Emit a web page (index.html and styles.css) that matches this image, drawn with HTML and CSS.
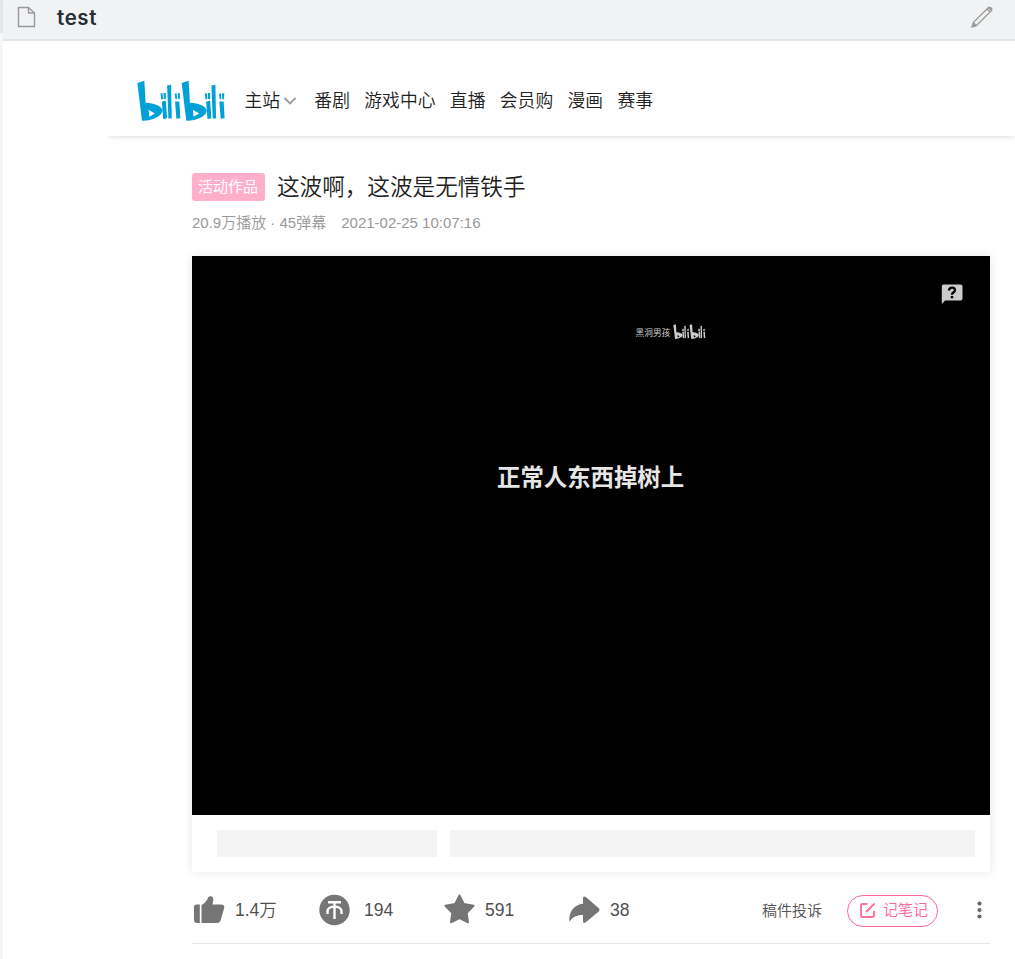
FILE: index.html
```html
<!DOCTYPE html>
<html lang="zh-CN">
<head>
<meta charset="utf-8">
<title>test</title>
<link rel="stylesheet" href="styles.css">
</head>
<body>
<svg class="defs" width="0" height="0" aria-hidden="true">
  <symbol id="bili" viewBox="0 0 267 124">
    <g id="half">
      <path fill-rule="evenodd" d="M0 9L21 2L25 69C50 70 76 80 76 93C73 111 43 124 14 123ZM34 90L53 101L36 111Z"/>
      <path d="M70 40h6l2 18h-6zM79 39h7v19h-6zM74 65l12-2 4 53-12 2zM90 17l12-3 2 102-10 1zM113 41h6l1 17h-5zM122 40h7l-1 18h-5zM114 65h13l3 51-12 1z"/>
    </g>
    <use href="#half" x="134"/>
  </symbol>
</svg>
<div class="page">
  <header class="titlebar">
    <svg class="file" width="19" height="22" viewBox="0 0 19 22"><path d="M1.500 1.500h10l6 5.500v13.500h-16zM11.500 1.500V7h6"/></svg>
    <h1>test</h1>
    <svg class="pencil" width="24" height="24" viewBox="0 0 24 24"><path d="M2 22l1.300-4.500L18.500 2.500q1-.8 2 0l1 1q.8 1 0 2L6.300 20.700zM3.300 17.500l3 3.200M17 4l3 3"/><path class="tip" d="M2 22l1-4 3 3zM18 3l1.500-1 2.500 2.500-1 1.500z"/></svg>
  </header>
  <div class="site">
    <nav class="nav">
      <svg class="logo" width="89" height="41"><use href="#bili"/></svg>
      <span class="main">主站<svg width="14" height="10" viewBox="0 0 14 10"><path d="M1.500 2l5.500 5.500L12.500 2"/></svg></span>
      <span>番剧</span><span>游戏中心</span><span>直播</span><span>会员购</span><span>漫画</span><span>赛事</span>
    </nav>
    <main class="content">
      <div class="heading"><span class="badge">活动作品</span><h2>这波啊，这波是无情铁手</h2></div>
      <div class="meta"><span>20.9万播放 · 45弹幕</span><span>2021-02-25 10:07:16</span></div>
      <section class="player">
        <div class="video">
          <svg class="help" width="22" height="21" viewBox="0 0 22 21"><path fill="#ccc" d="M2.500.5h17q2 0 2 2v12q0 2-2 2H4L.8 20V2.500Q.8.500 2.500.5z"/><path fill="none" stroke="#000" stroke-width="2.400" d="M8 6.500C8 2.600 14 2.800 14 6.300 14 8.500 11 8.200 11 10.800"/><path d="M9.700 12h2.600v2.300H9.700z"/></svg>
          <div class="mark"><span>黑洞男孩</span><svg width="33" height="15"><use href="#bili"/></svg></div>
          <div class="subtitle">正常人东西掉树上</div>
        </div>
        <div class="controls"><i class="slot short"></i><i class="slot long"></i></div>
      </section>
      <div class="toolbar">
        <span class="op like"><svg width="32" height="32" viewBox="0 0 32 32"><path d="M4.500 10.500H7.800V29H5Q2 29 2 26V13.500q0-3 2.500-3zM9.500 11q3-1 5.800-5.500c.8-1.600 1-3.200 3-3.200 2.500 0 3.200 1.700 3 3.700l-.8 4.500H29q4 0 3.200 3.500l-3.300 11.500Q28 29 25 29H9.500z"/></svg>1.4万</span>
        <span class="op coin"><svg width="32" height="32" viewBox="0 0 32 32"><circle cx="16.500" cy="16" r="15.200"/><path class="line" d="M10 8.200h13M16.500 8.500V25M9.500 20v-2.500c0-6.500 14-6.500 14 0V20"/></svg>194</span>
        <span class="op"><svg width="32" height="32" viewBox="0 0 32 32"><path class="star" d="M16.500 1.500l4.400 8.600 9.700 1.600-6.900 7 1.300 9.600-8.500-4.200L8 28.300l1.300-9.600-6.900-7 9.700-1.600z"/></svg>591</span>
        <span class="op"><svg width="32" height="32" viewBox="0 0 32 32"><path d="M15 4.500q0-3 2.800-1.500l13 11.300q1.700 1.500 0 3.200L17.800 28.300Q15 30 15 27v-6C8 21 4.500 23 1.500 28 .3 17.500 6.500 10.500 15 9.800z"/></svg>38</span>
        <span class="report">稿件投诉</span>
        <span class="note"><svg width="17" height="17" viewBox="0 0 17 17"><path d="M8.500 2H3.200Q2 2 2 3.200v10.600Q2 15 3.200 15h10.600q1.200 0 1.200-1.200V9M7 10l8.500-8.500"/></svg><span>记笔记</span></span>
        <svg class="more" width="6" height="18" viewBox="0 0 6 18"><circle cx="2.500" cy="2.500" r="2.100"/><circle cx="2.500" cy="9" r="2.100"/><circle cx="2.500" cy="15.500" r="2.100"/></svg>
      </div>
    </main>
  </div>
</div>
</body>
</html>
```
FILE: styles.css
```css
* { box-sizing: border-box; }
body {
  margin: 0;
  height: 959px;
  padding-left: 3px;
  overflow: hidden;
  background: linear-gradient(#e4e5e7 33px, #f5f6f8 33px);
  font-family: "Liberation Sans", "Noto Sans CJK SC", sans-serif;
}
svg { display: block; flex: none; }
.defs { position: absolute; }
.page { height: 959px; background: #fff; border-radius: 4px 0 0; overflow: hidden; }
.titlebar {
  display: flex;
  align-items: center;
  height: 41px;
  padding: 0 21px 6px 14px;
  background: #f1f2f4;
  border-bottom: 2px solid #e2e4e7;
}
.titlebar h1 {
  flex: 1;
  margin: 0 0 0 20px;
  padding: 2px 0 0 1px;
  font: 600 20.5px/32px Inter, sans-serif;
  letter-spacing: .6px;
  color: #292c30;
}
.file, .pencil { fill: none; stroke: #999; stroke-width: 1.4; }
.pencil { stroke-width: 1.3; }
.pencil .tip { fill: #999; stroke: none; }
.site { margin-left: 105px; }
.nav {
  display: flex;
  align-items: center;
  gap: 14.4px;
  height: 95px;
  padding: 24px 0 0 29px;
  box-shadow: 0 1px 5px rgba(0, 0, 0, .13);
  clip-path: inset(0 0 -8px 0);
  font-size: 17.8px;
  line-height: 26px;
  font-weight: 350;
  color: #212121;
  white-space: nowrap;
}
.logo { fill: #00a1d6; margin-right: 4px; }
.main { display: flex; align-items: center; gap: 3px; margin-right: 3px; }
.main svg { fill: none; stroke: #999; stroke-width: 1.8; }
.content { width: 798px; margin-left: 84px; padding-top: 37px; }
.heading { display: flex; align-items: center; height: 28px; gap: 12px; }
.badge {
  width: 73px;
  height: 28px;
  padding-right: 1px;
  border-radius: 3px;
  background: #ffafc9;
  color: #fff;
  font-size: 15px;
  line-height: 27px;
  text-align: center;
}
.heading h2 { margin: 0; padding-top: 1px; font-size: 22.6px; line-height: 28px; font-weight: 350; color: #212121; }
.meta {
  display: flex;
  gap: 15px;
  height: 24px;
  margin-top: 10px;
  font-size: 15px;
  line-height: 24px;
  font-weight: 350;
  color: #999;
}
.player { margin-top: 21px; height: 616px; box-shadow: 0 0 10px rgba(0, 0, 0, .1); }
.video { position: relative; height: 559px; background: #000; }
.help { position: absolute; left: 749px; top: 28px; }
.mark {
  position: absolute;
  left: 443.5px;
  top: 67px;
  display: flex;
  align-items: center;
  gap: 2.5px;
  height: 17px;
  color: #ccc;
  fill: #ccc;
  font-size: 8.7px;
  line-height: 17px;
}
.mark span { padding-top: 3px; }
.subtitle {
  position: absolute;
  left: 305px;
  top: 204px;
  color: #e6e6e6;
  font-size: 23.4px;
  line-height: 36px;
  font-weight: 700;
  white-space: nowrap;
}
.controls { display: flex; gap: 13px; padding: 15px 15px 15px 25px; }
.slot { height: 27px; background: #f4f4f4; }
.short { width: 220px; }
.long { flex: 1; }
.toolbar {
  display: flex;
  align-items: center;
  height: 72px;
  padding: 5px 7px 0 0;
  border-bottom: 1px solid #e5e9ef;
  color: #505050;
}
.op {
  display: flex;
  align-items: center;
  gap: 10px;
  width: 125px;
  font-size: 17.5px;
  line-height: 26px;
  font-weight: 350;
}
.op svg { fill: #757575; overflow: visible; }
.like { gap: 11px; width: 126px; }
.coin { gap: 14px; }
.line { fill: none; stroke: #fff; stroke-width: 2.400; }
.star { stroke: #757575; stroke-width: 2; stroke-linejoin: round; }
.report { margin-left: 69px; padding-top: 2px; font-size: 15px; font-weight: 350; line-height: 24px; }
.note {
  display: flex;
  align-items: center;
  gap: 7px;
  width: 91px;
  height: 32px;
  margin: 2px 0 0 25px;
  padding-left: 11px;
  border: 1px solid #ff6699;
  border-radius: 16px;
  color: #ff6699;
  font-size: 15px;
  line-height: 24px;
  font-weight: 350;
}
.note span { padding-bottom: 2px; }
.note svg { fill: none; stroke: #ff6f98; stroke-width: 1.9; margin-bottom: 1px; }
.more { margin-left: auto; fill: #666; }
```
